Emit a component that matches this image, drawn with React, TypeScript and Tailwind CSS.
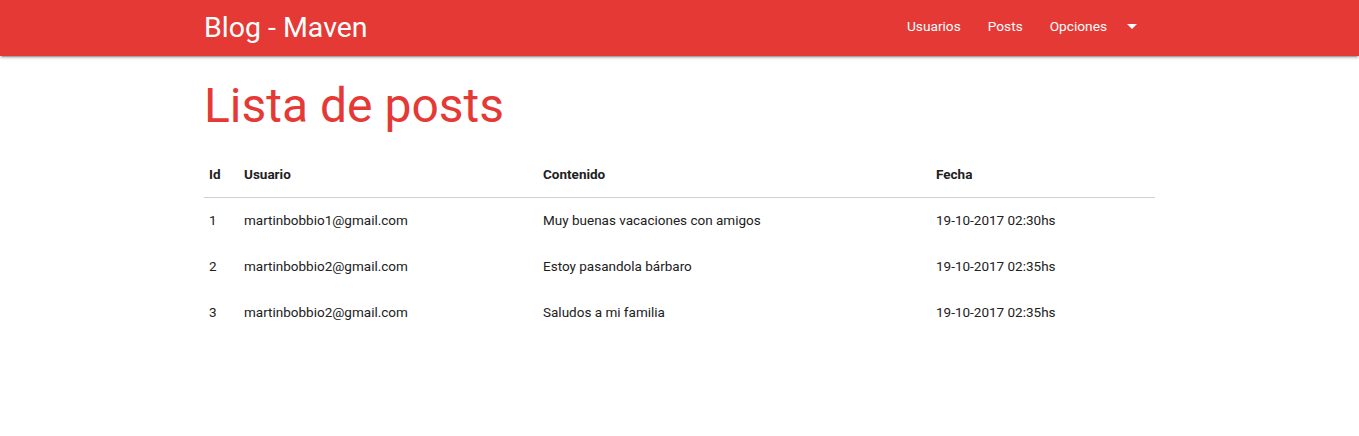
import React from "react";

const rows = [
  { id: 1, user: "martinbobbio1@gmail.com", content: "Muy buenas vacaciones con amigos", date: "19-10-2017 02:30hs" },
  { id: 2, user: "martinbobbio2@gmail.com", content: "Estoy pasandola bárbaro", date: "19-10-2017 02:35hs" },
  { id: 3, user: "martinbobbio2@gmail.com", content: "Saludos a mi familia", date: "19-10-2017 02:35hs" },
];

export default function App() {
  return (
    <div className="min-h-[436px] bg-white text-[#212121]" style={{ fontFamily: "Roboto, 'Liberation Sans', sans-serif" }}>
      <nav className="h-[56px] bg-[#e53935] shadow-[0_2px_2px_0_rgba(0,0,0,0.14),0_1px_5px_0_rgba(0,0,0,0.12),0_3px_1px_-2px_rgba(0,0,0,0.2)]">
        <div className="mx-auto flex h-full w-[951px] items-center justify-between">
          <a className="text-[28.5px] leading-none text-white">Blog - Maven</a>
          <ul className="flex h-full items-center pb-[4px] text-[13.7px] text-white">
            <li className="px-[13.5px]">Usuarios</li>
            <li className="px-[13.5px]">Posts</li>
            <li className="flex items-center pl-[13.5px] pr-[11px]">
              <span>Opciones</span>
              <svg width="24" height="24" viewBox="0 0 24 24" className="ml-[13px]">
                <path d="M7 10l5 5 5-5z" fill="white" />
              </svg>
            </li>
          </ul>
        </div>
      </nav>
      <div className="mx-auto w-[951px]">
        <h2 className="mt-[22px] mb-[18px] text-[48px] leading-[1.15] text-[#e53935]">Lista de posts</h2>
        <table className="w-full border-collapse text-left text-[13.5px]">
          <thead>
            <tr className="border-b border-[#d0d0d0]">
              <th className="w-[35px] px-[5px] h-[46px] font-bold">Id</th>
              <th className="w-[299px] px-[5px] h-[46px] font-bold">Usuario</th>
              <th className="w-[393px] px-[5px] h-[46px] font-bold">Contenido</th>
              <th className="px-[5px] h-[46px] font-bold">Fecha</th>
            </tr>
          </thead>
          <tbody>
            {rows.map((r) => (
              <tr key={r.id}>
                <td className="px-[5px] h-[46px]">{r.id}</td>
                <td className="px-[5px] h-[46px]">{r.user}</td>
                <td className="px-[5px] h-[46px]">{r.content}</td>
                <td className="px-[5px] h-[46px]">{r.date}</td>
              </tr>
            ))}
          </tbody>
        </table>
      </div>
    </div>
  );
}
